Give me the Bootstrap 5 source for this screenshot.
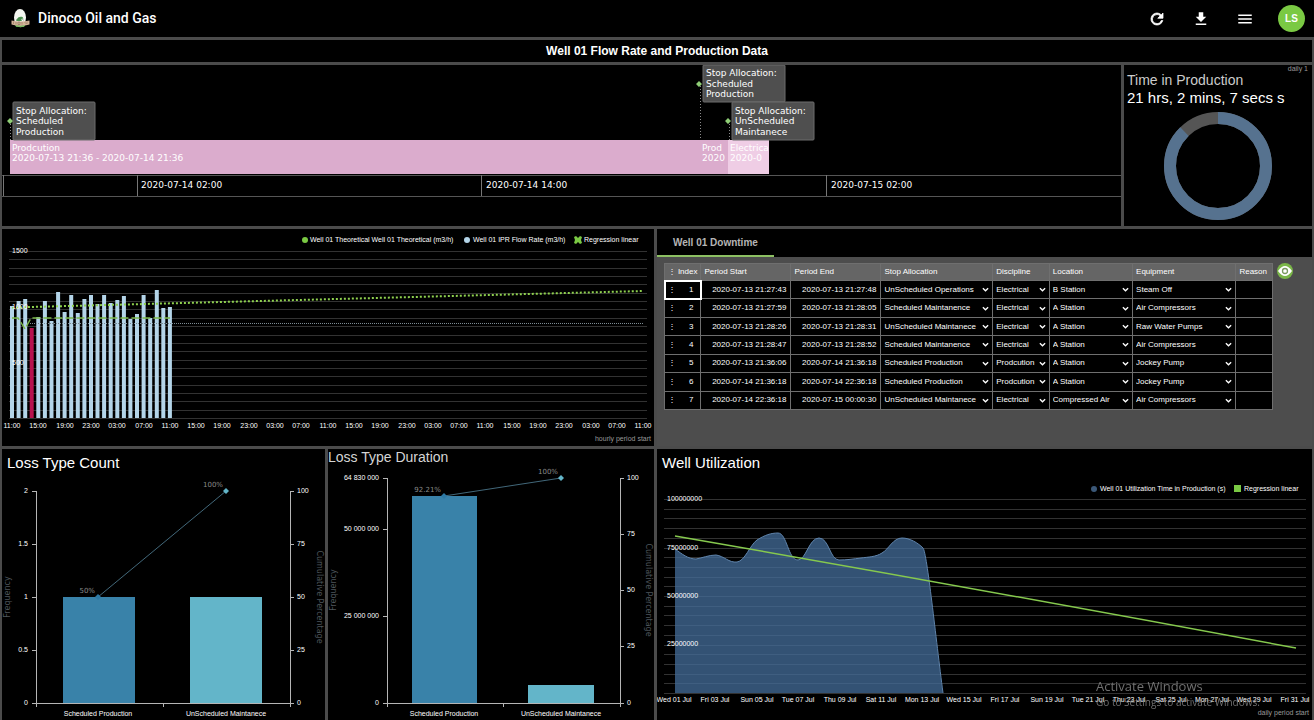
<!DOCTYPE html>
<html lang="en">
<head>
<meta charset="utf-8">
<meta name="viewport" content="width=device-width, initial-scale=1">
<title>Dinoco Oil and Gas</title>
<link href="https://cdn.jsdelivr.net/npm/bootstrap@5.3.0/dist/css/bootstrap.min.css" rel="stylesheet">
<style>
  :root { --frame: #4b4b4b; --green: #7ac943; }
  body { background: var(--frame); color: #fff; font-family: "Liberation Sans", Arial, sans-serif; font-size: 14px; }
  svg { display: block; }
  .topbar { background: #000; height: 37px; padding: 0 9px 0 11px; }
  .brand-name { font-family: Roboto, sans-serif; font-weight: 500; font-size: 14px; color: #fff; }
  .tools { gap: 18px; }
  .tool-btn { width: 26px; height: 26px; color: #fff; background: none; border: 0; padding: 4px; }
  .avatar { width: 27px; height: 27px; margin-left: 2px; border: 0; padding: 0; border-radius: 50%; background: var(--green); color: #fff; font-size: 10px; font-weight: 700; }
  .board { padding: 3px 2px 0; display: grid; gap: 3px; }
  .band { display: grid; gap: 3px; }
  .band-time { grid-template-columns: 1119fr 188fr; }
  .band-flow { grid-template-columns: 652fr 655fr; }
  .band-loss { grid-template-columns: 323fr 326fr 655fr; }
  .pane { background: #000; min-width: 0; overflow: hidden; }
  .page-title { font-size: 12px; font-weight: 700; line-height: 22px; }
  .pane-title { font-size: 15px; font-weight: 400; line-height: 16px; margin: 0; }
  .pane-title.roomy { padding: 6px 5px; }
  .pane-title.tight { font-size: 14px; line-height: 16px; color: #d5d5d5; }
  .period { font-size: 7px; line-height: 7px; color: #999; }
  .clock-pane { padding: 0 4px 0 3px; }
  .metric { font-size: 14px; line-height: 17px; margin: 0; }
  .metric-name { color: #ccc; }
  .metric-value { font-size: 15px; }
  .tab-strip { height: 28px; background: #000; }
  .tab-strip .nav-link, .tab-strip .nav-link:hover { height: 28px; padding: 0 16px; background: #000; border: 0; border-bottom: 2px solid #8dc063; border-radius: 0; color: #b5b5b5; font-size: 10px; font-weight: 700; }
  .sheet-pane { background: #4d4d4d; }
  .sheet-area { padding: 6px 19px 7px 7px; gap: 4px; }
  .sheet { table-layout: fixed; width: 100%; height: 147px; border-collapse: collapse; font-size: 8px; line-height: 10px; }
  .sheet th, .sheet td { border: 1px solid #6f6f6f; padding: 0 3px; white-space: nowrap; overflow: hidden; }
  .sheet th { background: #656565; font-weight: 400; color: #fff; height: 17px; }
  .sheet td { background: #000; color: #fff; height: 18px; }
  .sheet .num { text-align: right; padding-right: 4px; }
  .sheet tr:first-child td.picked { outline: 2px solid #fff; outline-offset: -1px; }
  .sheet select { appearance: none; display: block; width: 100%; border: 0; padding: 0; margin: 0; color: #fff; font-size: 8px; line-height: 12px;
    background: #000 url("data:image/svg+xml,%3Csvg xmlns='http://www.w3.org/2000/svg' viewBox='0 0 8 8'%3E%3Cpath d='M1 2.5l3 3 3-3' fill='none' stroke='white' stroke-width='1.5'/%3E%3C/svg%3E") no-repeat right center / 7px 7px; }
  .eye-btn { width: 16px; height: 16px; border: 0; padding: 0; background: none; }
  .t7 { font-size: 7px; fill: #fff; }
  .t7.dim { fill: #999; }
  .pct { font-family: "DejaVu Sans", sans-serif; font-size: 7px; fill: #8a8a8a; }
  .axis-name { font-family: "DejaVu Sans", sans-serif; font-size: 8px; fill: #4e565c; }
  .tl { font-family: "DejaVu Sans", Verdana, sans-serif; font-size: 9px; fill: #fff; }
  .crisp { shape-rendering: crispEdges; }
  .watermark { position: fixed; right: 56px; bottom: 11px; width: 162px; color: #8c8c8c; opacity: .8; pointer-events: none; font-family: "Open Sans", sans-serif; }
  .watermark .wm-head { font-size: 13px; line-height: 18px; }
  .watermark .wm-note { font-size: 10px; line-height: 14px; white-space: nowrap; }
  @media (max-width: 800px) { .band-time, .band-flow, .band-loss { grid-template-columns: 1fr; } }
</style>
</head>
<body>
<nav class="topbar d-flex align-items-center">
  <a href="#" class="d-flex align-items-center text-decoration-none gap-2">
    <svg width="19" height="19" viewBox="0 0 38 38" aria-hidden="true">
      <ellipse cx="18" cy="17" rx="12" ry="17" fill="#f4f6f0"/>
      <path d="M6 24C9 34 27 36 31 25L26 36H10z" fill="#4f9a48"/>
      <path d="M12 21c2-6 7-6 11-5l2 3-5 1 2 4H10z" fill="#4c9350"/>
      <path d="M10 22c4-4 12-3 16 1" fill="none" stroke="#3c7a40" stroke-width="1"/>
      <path d="M1 23q17 4 36 0v8q-18 5-36 0z" fill="#d3b297"/>
      <path d="M5 25v5M10 26v5M14 26h4v5h-4zM22 26v5M27 26l4 4M32 25v5" fill="none" stroke="#7d6450" stroke-width="1"/>
      <path d="M9 33q10 5 19 0-8 6-19 0z" fill="#8cc56e" stroke="#8cc56e"/>
    </svg>
    <span class="brand-name">Dinoco Oil and Gas</span>
  </a>
  <div class="tools ms-auto d-flex align-items-center">
    <button class="tool-btn" aria-label="Refresh"><svg viewBox="0 0 24 24" width="18" height="18" fill="currentColor" stroke="currentColor"><path d="M17.65 6.35A7.96 7.96 0 0 0 12 4a8 8 0 1 0 7.73 10h-2.08A6 6 0 1 1 12 6c1.66 0 3.14.69 4.22 1.78L13 11h7V4z"/></svg></button>
    <button class="tool-btn" aria-label="Download"><svg viewBox="0 0 24 24" width="18" height="18" fill="currentColor"><path d="M19 9h-4V3H9v6H5l7 7zM5 18v2h14v-2z"/></svg></button>
    <button class="tool-btn" aria-label="Menu"><svg viewBox="0 0 24 24" width="18" height="18" fill="currentColor"><path d="M3 18h18v-2H3zm0-5h18v-2H3zm0-7v2h18V6z"/></svg></button>
    <button class="avatar" aria-label="Account">LS</button>
  </div>
</nav>

<main class="board">
  <header class="pane text-center"><h1 class="page-title m-0">Well 01 Flow Rate and Production Data</h1></header>

  <div class="band band-time">
    <section class="pane">
      <svg viewBox="2 65 1119 161" width="100%" role="img" aria-label="Stop allocation timeline">
        <defs>
          <clipPath id="clipProd"><rect x="702" y="140" width="24" height="34"/></clipPath>
          <clipPath id="clipElec"><rect x="728" y="140" width="40" height="34"/></clipPath>
        </defs>
        <g class="crisp">
          <rect x="10" y="140" width="718" height="34" fill="#dbaccd"/>
          <rect x="728" y="140" width="41" height="34" fill="#efcde5"/>
          <path d="M2 175H1121M2 196H1121" stroke="#555"/>
          <path d="M3 175V196M137 175V196M481 175V196M826 175V196" stroke="#777"/>
          <path d="M10 124V140M700 86V140M729 124V140" stroke="#8a8a8a" stroke-dasharray="1 2"/>
        </g>
        <g fill="#4f4f4f" stroke="#6c6c6c">
          <rect x="13" y="102" width="82" height="38" rx="1"/>
          <rect x="703" y="65" width="82" height="37" rx="1"/>
          <rect x="732" y="102" width="82" height="38" rx="1"/>
        </g>
        <path d="M7 121l3-3 3 3-3 3zM696 84l3-3 3 3-3 3zM725 121l3-3 3 3-3 3z" fill="#8fce76"/>
        <g class="tl">
          <text x="16" y="114">Stop Allocation:</text><text x="16" y="124">Scheduled</text><text x="16" y="135">Production</text>
          <text x="706" y="76">Stop Allocation:</text><text x="706" y="87">Scheduled</text><text x="706" y="97">Production</text>
          <text x="735" y="114">Stop Allocation:</text><text x="735" y="124">UnScheduled</text><text x="735" y="135">Maintanece</text>
          <text x="12" y="151">Prodcution</text><text x="12" y="161">2020-07-13 21:36 - 2020-07-14 21:36</text>
          <g clip-path="url(#clipProd)"><text x="702" y="151">Prod</text><text x="702" y="161">2020</text></g>
          <g clip-path="url(#clipElec)"><text x="730" y="151">Electrica</text><text x="730" y="161">2020-0</text></g>
          <text x="141" y="188">2020-07-14 02:00</text><text x="486" y="188">2020-07-14 14:00</text><text x="831" y="188">2020-07-15 02:00</text>
        </g>
      </svg>
    </section>
    <section class="pane clock-pane">
      <div class="period text-end">daily 1</div>
      <h2 class="metric metric-name">Time in Production</h2>
      <p class="metric metric-value">21 hrs, 2 mins, 7 secs s</p>
      <svg class="mx-auto mt-1" width="108" height="112" viewBox="0 0 108 112" role="img" aria-label="Time in production">
        <g fill="none" stroke-width="12" transform="rotate(-90 54 56)">
          <circle cx="54" cy="56" r="48" stroke="#555"/>
          <circle cx="54" cy="56" r="48" stroke="#56728f" pathLength="1000" stroke-dasharray="877 1000"/>
        </g>
      </svg>
    </section>
  </div>

  <div class="band band-flow">
    <section class="pane">
      <svg id="flow" viewBox="2 229 652 217" width="100%" role="img" aria-label="Well 01 flow rate"></svg>
    </section>
    <section class="pane sheet-pane">
      <div class="tab-strip nav"><button class="nav-link">Well 01 Downtime</button></div>
      <div class="sheet-area d-flex align-items-start">
        <table class="sheet">
          <colgroup><col style="width:6%"><col style="width:14.8%"><col style="width:14.8%"><col style="width:18.4%"><col style="width:9.3%"><col style="width:13.7%"><col style="width:17%"><col></colgroup>
          <thead><tr><th><div class="d-flex justify-content-between"><span>⋮</span><span>Index</span></div></th><th>Period Start</th><th>Period End</th><th>Stop Allocation</th><th>Discipline</th><th>Location</th><th>Equipment</th><th>Reason</th></tr></thead>
          <tbody id="rows"></tbody>
        </table>
        <button class="eye-btn flex-shrink-0" aria-label="Show columns">
          <svg viewBox="0 0 16 16" width="16" height="16"><circle cx="8" cy="8" r="8" fill="#7ab648"/><path d="M1 8q7-10 14 0-7 10-14 0z" fill="#fff"/><circle cx="8" cy="8" r="2.5" fill="#fff" stroke="#7a9a60" stroke-width="1.3"/></svg>
        </button>
      </div>
    </section>
  </div>

  <div class="band band-loss">
    <section class="pane">
      <h2 class="pane-title roomy">Loss Type Count</h2>
      <svg id="count" viewBox="2 477 323 243" width="100%" role="img" aria-label="Loss type count"></svg>
    </section>
    <section class="pane">
      <h2 class="pane-title tight">Loss Type Duration</h2>
      <svg id="duration" viewBox="328 465 326 255" width="100%" role="img" aria-label="Loss type duration"></svg>
    </section>
    <section class="pane">
      <h2 class="pane-title roomy">Well Utilization</h2>
      <svg id="util" viewBox="657 477 655 243" width="100%" role="img" aria-label="Well utilization"></svg>
    </section>
  </div>
</main>

<div class="watermark"><div class="wm-head">Activate Windows</div><div class="wm-note">Go to Settings to activate Windows.</div></div>

<script src="https://cdn.jsdelivr.net/npm/bootstrap@5.3.0/dist/js/bootstrap.bundle.min.js"></script>
<script>
const label = (x, y, s, anchor = 'start', cls = 't7', extra = '') =>
  `<text class="${cls}" x="${x}" y="${y}" text-anchor="${anchor}" ${extra}>${s}</text>`;

function gridLines(x1, x2, top, bottom, n) {
  let d = '';
  for (let i = 0; i <= n; i++) d += `M${x1} ${Math.round(top + (bottom - top) * i / n)}H${x2}`;
  return `<path class="crisp" d="${d}" stroke="#323232"/>`;
}

// Downtime table
const rows = [
  ['2020-07-13 21:27:43', '2020-07-13 21:27:48', 'UnScheduled Operations', 'Electrical', 'B Station', 'Steam Off'],
  ['2020-07-13 21:27:59', '2020-07-13 21:28:05', 'Scheduled Maintanence', 'Electrical', 'A Station', 'Air Compressors'],
  ['2020-07-13 21:28:26', '2020-07-13 21:28:31', 'UnScheduled Maintanece', 'Electrical', 'A Station', 'Raw Water Pumps'],
  ['2020-07-13 21:28:47', '2020-07-13 21:28:52', 'Scheduled Maintanence', 'Electrical', 'A Station', 'Air Compressors'],
  ['2020-07-13 21:36:06', '2020-07-14 21:36:18', 'Scheduled Production', 'Prodcution', 'A Station', 'Jockey Pump'],
  ['2020-07-14 21:36:18', '2020-07-14 22:36:18', 'Scheduled Production', 'Prodcution', 'A Station', 'Jockey Pump'],
  ['2020-07-14 22:36:18', '2020-07-15 00:00:30', 'UnScheduled Maintanece', 'Electrical', 'Compressed Air', 'Air Compressors']
];
const heads = ['Stop allocation', 'Discipline', 'Location', 'Equipment'];
document.getElementById('rows').innerHTML = rows.map((r, i) =>
  `<tr><td class="picked"><div class="d-flex justify-content-between pe-1"><span>⋮</span><span>${i + 1}</span></div></td>` +
  r.slice(0, 2).map(t => `<td class="num">${t}</td>`).join('') +
  r.slice(2).map((t, k) => `<td><select aria-label="${heads[k]}, row ${i + 1}"><option>${t}</option></select></td>`).join('') +
  '<td></td></tr>').join('');

// Hourly flow rate
(function () {
  const heights = [112, 117, 119, 90, 101, 117, 97, 126, 106, 123, 105, 119, 123, 114, 123, 115, 118, 122, 99, 104, 123, 100, 128, 110, 111];
  const hours = ['11:00', '15:00', '19:00', '23:00', '03:00', '07:00'];
  let s = gridLines(9, 647, 251, 418, 20);
  s += heights.map((h, i) => `<rect x="${(10 + i * 6.58).toFixed(1)}" y="${418 - h}" width="4" height="${h}" fill="${i === 3 ? '#b8134e' : '#b4d5e9'}"/>`).join('');
  s += '<path class="crisp" d="M30 323H643" stroke="#7d8c94" stroke-dasharray="1 1"/>';
  s += '<path d="M12 318H18L25 329L31 318H170" fill="none" stroke="#7ab648" stroke-width="1.4" stroke-dasharray="8 3"/>';
  s += '<path d="M12 308L30 307L643 291" fill="none" stroke="#8fd14f" stroke-width="2" stroke-dasharray="2 2"/>';
  s += label(12, 253, '1500') + label(12, 309, '1000') + label(12, 365, '500');
  for (let i = 0; i < 25; i++) s += label(Math.round(12 + i * 26.3), 428, hours[i % 6], 'middle');
  s += '<circle cx="305" cy="240" r="3" fill="#7ac943"/>' + label(310, 242, 'Well 01 Theoretical Well 01 Theoretical (m3/h)');
  s += '<circle cx="467" cy="240" r="3" fill="#b4d5e9"/>' + label(473, 242, 'Well 01 IPR Flow Rate (m3/h)');
  s += '<path d="M574 237l2-1 2 2 2-2 2 1-1 3 1 3-2 1-2-2-2 2-2-1 1-3z" fill="#7ac943"/>' + label(584, 242, 'Regression linear');
  s += label(651, 441, 'hourly period start', 'end', 't7 dim');
  document.getElementById('flow').innerHTML = s;
})();

// Pareto charts
function pareto(id, c) {
  const base = 703;
  let s = '<g class="crisp" fill="none" stroke="#b5b5b5">';
  s += `<path d="M${c.x1} ${c.top}V${base + 4}M${c.x2} ${c.top}V${base + 4}M${c.mid} ${base}V${base + 4}M${c.x1 - 4} ${base}H${c.x2 + 4}"/>`;
  s += `<path d="${c.left.map(t => `M${c.x1 - 4} ${t[0]}h4`).join('')}${c.right.map(t => `M${c.x2} ${t[0]}h4`).join('')}"/></g>`;
  c.bars.forEach((b, i) => s += `<rect x="${b[0]}" y="${b[1]}" width="${b[2]}" height="${base - b[1]}" fill="${i ? '#63b5c9' : '#3982a9'}"/>`);
  const [p, q] = c.line;
  s += `<path d="M${p}L${q}" stroke="#42687a"/>`;
  s += `<path d="M${p}m-3 0l3-3 3 3-3 3z" fill="#2e79a3"/><path d="M${q}m-3 0l3-3 3 3-3 3z" fill="#63b5c9"/>`;
  c.left.forEach(t => s += label(c.x1 - 8, t[0] + 2, t[1], 'end'));
  c.right.forEach(t => s += label(c.x2 + 7, t[0] + 2, t[1]));
  s += label(p[0] - 3, p[1] - 4, c.pct, 'end', 'pct') + label(q[0] - 3, q[1] - 4, '100%', 'end', 'pct');
  s += label(p[0], 716, 'Scheduled Production', 'middle') + label(q[0], 716, 'UnScheduled Maintanece', 'middle');
  s += label(0, 0, 'Frequency', 'middle', 'axis-name', `transform="translate(${c.fx} ${c.cy}) rotate(-90)"`);
  s += label(0, 0, 'Cumulative Percentage', 'middle', 'axis-name', `transform="translate(${c.px} ${c.cy}) rotate(90)"`);
  document.getElementById(id).innerHTML = s;
}
pareto('count', { x1: 36, x2: 290, mid: 163, top: 491, cy: 597, fx: 10, px: 317, pct: '50%',
  left: [[491, '2'], [544, '1.5'], [597, '1'], [650, '0.5'], [703, '0']],
  right: [[491, '100'], [544, '75'], [597, '50'], [650, '25'], [703, '0']],
  bars: [[63, 597, 72], [190, 597, 72]], line: [[98, 597], [226, 491]] });
pareto('duration', { x1: 387, x2: 620, mid: 503, top: 478, cy: 590, fx: 336, px: 646, pct: '92.21%',
  left: [[478, '64 830 000'], [529, '50 000 000'], [616, '25 000 000'], [703, '0']],
  right: [[478, '100'], [534, '75'], [590, '50'], [646, '25'], [703, '0']],
  bars: [[412, 496, 65], [528, 685, 66]], line: [[444, 496], [561, 478]] });

// Daily utilization
(function () {
  const days = ['Wed', 'Fri', 'Sun', 'Tue', 'Thu', 'Sat', 'Mon'];
  const curve = 'M675 549C682 554 688 559 696 559C702 558 709 555 716 555C724 556 729 563 737 562C745 561 750 545 757 540C765 535 771 533 778 533C787 533 788 560 798 560C806 560 809 538 819 538C829 538 830 560 839 560C847 560 853 559 861 558C868 557 876 557 882 553C889 549 893 538 902 538C910 538 918 543 923 548C927 552 936 640 943 693';
  let s = gridLines(664, 1306, 499, 693, 20);
  s += `<path d="${curve}H675z" fill="#436c98" fill-opacity=".76"/><path d="${curve}" fill="none" stroke="#5f84ac"/>`;
  s += '<path d="M675 536Q985 590 1296 648" fill="none" stroke="#86c94e" stroke-width="1.5"/>';
  ['100000000', '75000000', '50000000', '25000000'].forEach((t, i) => s += label(667, [501, 550, 598, 646][i], t));
  for (let i = 0; i < 16; i++) s += label(Math.round(674 + i * 41.4), 702, `${days[i % 7]} ${String(1 + i * 2).padStart(2, '0')} Jul`, 'middle');
  s += '<circle cx="1094" cy="489" r="3" fill="#3b5878"/>' + label(1100, 491, 'Well 01 Utilization Time in Production (s)');
  s += '<rect x="1234" y="485" width="7" height="7" fill="#7ac943"/>' + label(1244, 491, 'Regression linear');
  s += label(1309, 715, 'daily period start', 'end', 't7 dim');
  document.getElementById('util').innerHTML = s;
})();
</script>
</body>
</html>
